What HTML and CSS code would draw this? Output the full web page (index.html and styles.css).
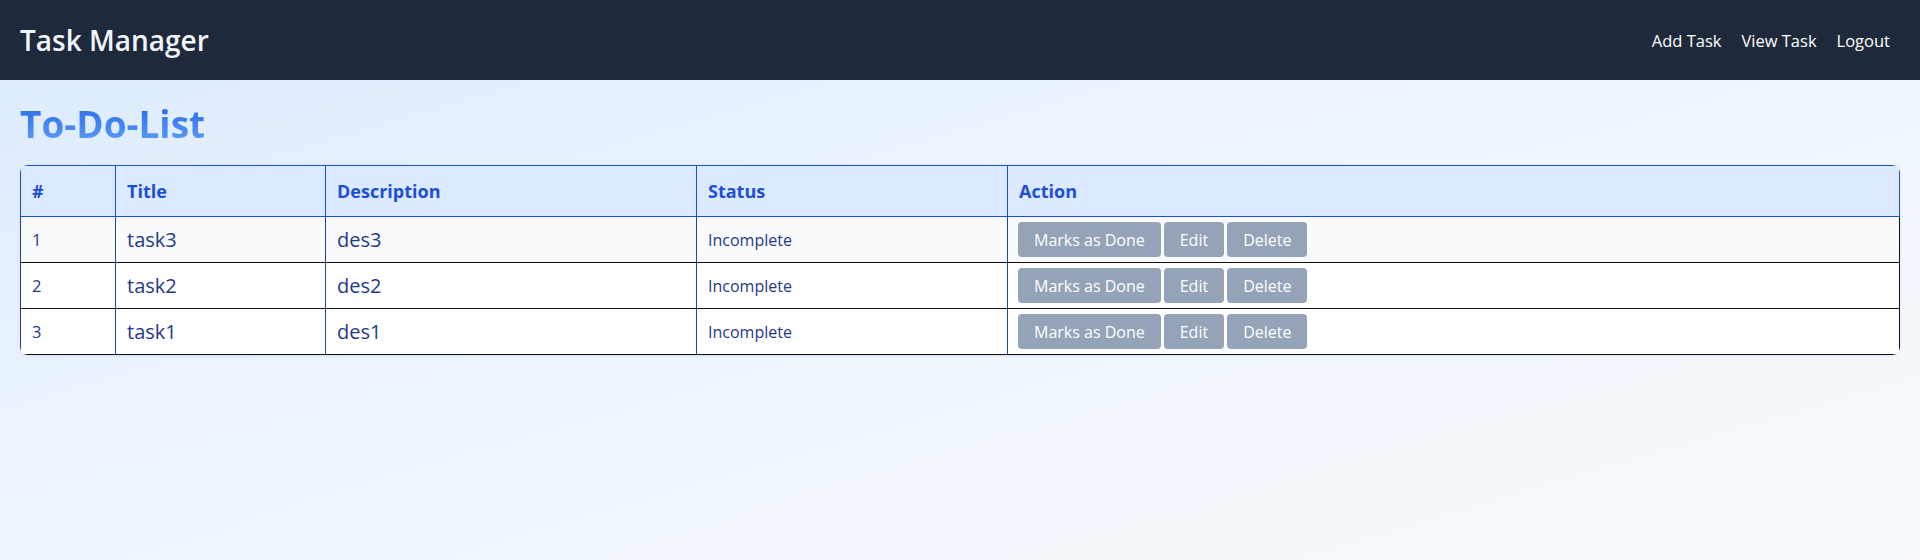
FILE: index.html
```html
<!DOCTYPE html>
<html lang="en">
<head>
<meta charset="utf-8">
<title>Task Manager</title>
<link rel="stylesheet" href="styles.css">
</head>
<body>
<nav class="navbar">
  <div class="brand">Task Manager</div>
  <div class="nav-links">
    <a class="nav-link" href="#">Add Task</a>
    <a class="nav-link" href="#">View Task</a>
    <a class="nav-link" href="#">Logout</a>
  </div>
</nav>
<main class="main">
  <h1 class="page-title">To-Do-List</h1>
  <div class="table-wrap">
    <table class="task-table">
      <thead>
        <tr>
          <th class="col-num">#</th>
          <th class="col-title">Title</th>
          <th class="col-desc">Description</th>
          <th class="col-status">Status</th>
          <th class="col-action">Action</th>
        </tr>
      </thead>
      <tbody>
        <tr>
          <td class="cell-num">1</td>
          <td class="cell-big">task3</td>
          <td class="cell-big">des3</td>
          <td class="cell-status">Incomplete</td>
          <td class="cell-action"><div class="actions"><button class="btn">Marks as Done</button><button class="btn">Edit</button><button class="btn">Delete</button></div></td>
        </tr>
        <tr>
          <td class="cell-num">2</td>
          <td class="cell-big">task2</td>
          <td class="cell-big">des2</td>
          <td class="cell-status">Incomplete</td>
          <td class="cell-action"><div class="actions"><button class="btn">Marks as Done</button><button class="btn">Edit</button><button class="btn">Delete</button></div></td>
        </tr>
        <tr>
          <td class="cell-num">3</td>
          <td class="cell-big">task1</td>
          <td class="cell-big">des1</td>
          <td class="cell-status">Incomplete</td>
          <td class="cell-action"><div class="actions"><button class="btn">Marks as Done</button><button class="btn">Edit</button><button class="btn">Delete</button></div></td>
        </tr>
      </tbody>
    </table>
  </div>
</main>
</body>
</html>
```
FILE: styles.css
```css
* { box-sizing: border-box; }

html, body {
  margin: 0;
  padding: 0;
}

body {
  min-height: 100vh;
  font-family: "Open Sans", "Noto Sans", sans-serif;
  background: linear-gradient(to bottom right, #dbeafe 0%, #eff6ff 50%, #f8fafc 100%);
  color: #1e3a8a;
}

.navbar {
  height: 80px;
  background: #1e293b;
  display: flex;
  align-items: center;
  justify-content: space-between;
  padding: 0 20px;
}

.brand {
  font-size: 28px;
  font-weight: 600;
  color: #f1f5f9;
}

.nav-links {
  display: flex;
  align-items: center;
}

.nav-link {
  color: #ffffff;
  text-decoration: none;
  font-size: 16.5px;
  padding: 0 10px;
}

.main {
  padding: 20px;
}

.page-title {
  margin: 0 0 17px 0;
  font-size: 37px;
  line-height: 48px;
  font-weight: 700;
  background: linear-gradient(180deg, #2563eb 0%, #60a5fa 100%);
  -webkit-background-clip: text;
  background-clip: text;
  color: transparent;
  display: inline-block;
}

.table-wrap {
  border-radius: 8px;
  overflow: hidden;
  box-shadow: 0 1px 3px rgba(30, 64, 175, 0.12);
}

.task-table {
  width: 100%;
  border-collapse: collapse;
  table-layout: fixed;
  background: #ffffff;
}

.col-num { width: 95px; }
.col-title { width: 210px; }
.col-desc { width: 371px; }
.col-status { width: 311px; }

.task-table th {
  background: #dbeafe;
  color: #1d4ed8;
  font-size: 18px;
  font-weight: 700;
  text-align: left;
  padding: 12px 11px;
  line-height: 26px;
  border-top: 1px solid #1d4ed8;
  border-bottom: 1px solid #1d4ed8;
  border-left: 1px solid #1d4ed8;
}
.task-table th:last-child { border-right: 1px solid #1d4ed8; }

.task-table td {
  padding: 5px 11px;
  height: 46px;
  vertical-align: middle;
  border-left: 1px solid #1e40af;
  border-bottom: 1px solid #111111;
  color: #1e3a8a;
}
.task-table td:last-child { border-right: 1px solid #111111; }

.task-table tbody tr { background: #ffffff; }
.task-table tbody tr:first-child { background: #f8fafc; }

.cell-num { font-size: 16.5px; }
.cell-big { font-size: 20px; }
.cell-status { font-size: 16px; }
.task-table td.cell-action { padding-left: 10px; }

.actions {
  display: flex;
  gap: 3px;
}

.btn {
  height: 35px;
  padding: 0 16px;
  border: none;
  border-radius: 4px;
  background: #94a3b8;
  color: #ffffff;
  font-family: "Open Sans", "Noto Sans", sans-serif;
  font-size: 16px;
  cursor: pointer;
}
```
